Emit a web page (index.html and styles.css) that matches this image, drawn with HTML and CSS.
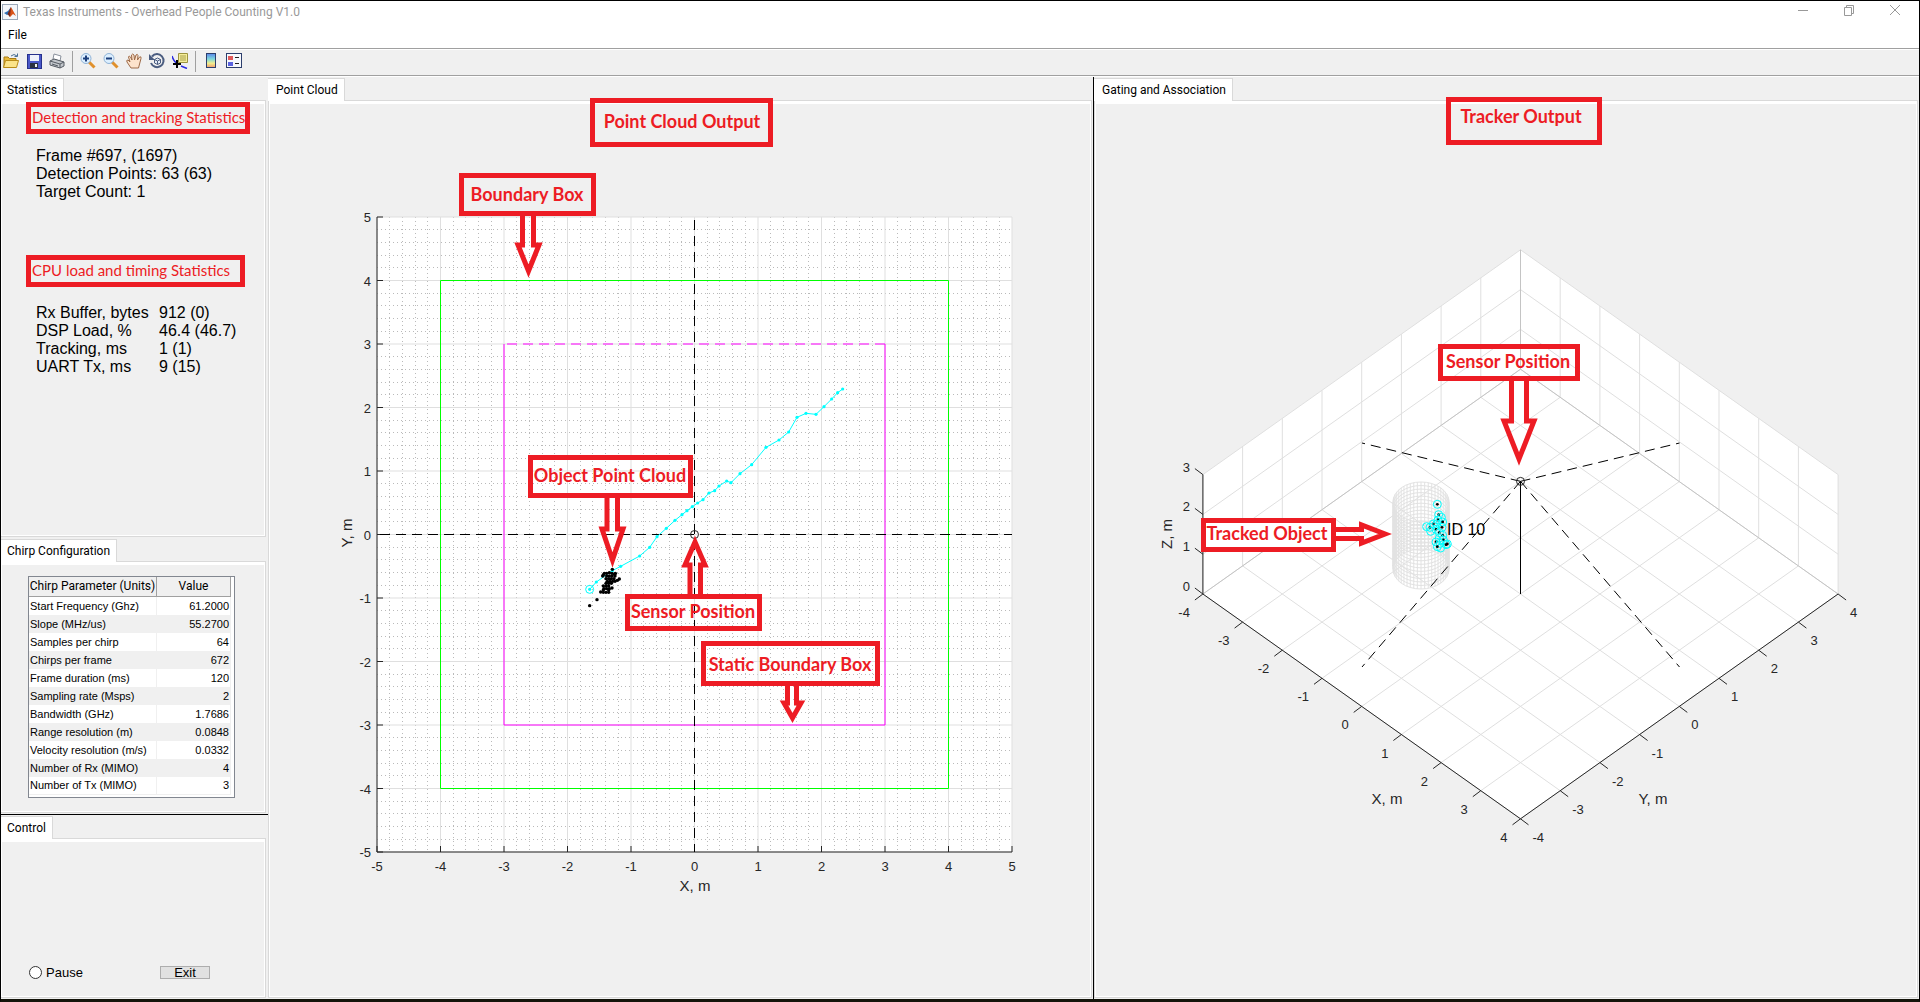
FILE: index.html
```html
<!DOCTYPE html>
<html lang="en">
<head>
<meta charset="utf-8">
<title>Texas Instruments - Overhead People Counting V1.0</title>
<link rel="stylesheet" href="styles.css">
</head>
<body>
<div class="window">
  <header class="titlebar">
    <svg class="app-icon" viewBox="0 0 16 16" aria-hidden="true">
      <rect x="0.5" y="0.5" width="15" height="15" fill="#f4f6fa" stroke="#9aa7b8"/>
      <path d="M2 9 L6 7 L9 3 L7.500 10 L5 11 Z" fill="#2f6fb5"/>
      <path d="M9 3 L14 12 L11 10 L8 13 L6 10 Z" fill="#d95319"/>
      <path d="M9 3 L8 13 L5.500 10 Z" fill="#7a2a1c"/>
    </svg>
    <h1 class="title">Texas Instruments - Overhead People Counting V1.0</h1>
    <div class="window-buttons">
      <button class="window-button" aria-label="Minimize"><svg viewBox="0 0 12 12"><path d="M1 6.500H11"/></svg></button>
      <button class="window-button" aria-label="Restore"><svg viewBox="0 0 12 12"><path d="M1.500 3.500H8.500V11.500H1.500ZM3.500 3.500V1.500H10.500V9.500H8.500"/></svg></button>
      <button class="window-button" aria-label="Close"><svg viewBox="0 0 12 12"><path d="M1 1L11 11M11 1L1 11"/></svg></button>
    </div>
  </header>

  <nav class="menubar"><button class="menu-item">File</button></nav>

  <div class="toolbar">
    <button class="tool" aria-label="Open"><svg viewBox="0 0 16 16">
      <path d="M1 14V4H5L6.500 5.500H13V8" fill="#e8b93a" stroke="#a87b12"/>
      <path d="M0.500 14.500L2.500 7.500H15.500L13.500 14.500Z" fill="#fbe38a" stroke="#b88a18"/>
      <path d="M8 3Q11 0 14 3M14.500 0.500V3.500H11.500" fill="none" stroke="#4a6f95"/></svg></button>
    <button class="tool" aria-label="Save"><svg viewBox="0 0 16 16">
      <rect x="1.500" y="1.500" width="14" height="14" fill="#4a58c8" stroke="#26308c"/>
      <rect x="4" y="2" width="9" height="6" fill="#eef1fb"/><rect x="4" y="10" width="8" height="5" fill="#2b3040"/>
      <rect x="9" y="11" width="2" height="3" fill="#f0f0f0"/></svg></button>
    <button class="tool" aria-label="Print"><svg viewBox="0 0 16 16">
      <path d="M5 1L12 3L11 8L4 6Z" fill="#fff" stroke="#8a919c"/>
      <path d="M1 8L5 6L15 9V13L11 15L1 12Z" fill="#c3c7cc" stroke="#555b63"/>
      <path d="M1 8L11 11L15 9M11 11V15M3 11L9 13" fill="none" stroke="#555b63"/></svg></button>
    <span class="tool-separator"></span>
    <button class="tool" aria-label="Zoom in"><svg viewBox="0 0 16 16">
      <path d="M9 9L14.500 14.500" stroke="#e0902c" stroke-width="3"/><circle cx="6" cy="5.500" r="5" fill="#dcefff" stroke="#8fb2d6"/>
      <path d="M3 5.500H9M6 2.500V8.500" stroke="#1c3f7c" stroke-width="2"/></svg></button>
    <button class="tool" aria-label="Zoom out"><svg viewBox="0 0 16 16">
      <path d="M9 9L14.500 14.500" stroke="#e0902c" stroke-width="3"/><circle cx="6" cy="5.500" r="5" fill="#dcefff" stroke="#8fb2d6"/>
      <path d="M3 5.500H9" stroke="#1c3f7c" stroke-width="2"/></svg></button>
    <button class="tool" aria-label="Pan"><svg viewBox="0 0 16 16">
      <path d="M5 15L1 9Q0 7 2 7L4 9L2.500 4Q3 2 4.500 4L6 7L5.500 2Q6.500 0 8 2L8.500 7L10 2Q11.500 0.500 12 2.500L11.500 7L13.500 4Q15.500 3 15 5.500L12.500 15Z" fill="#fde3cc" stroke="#9c6a48"/></svg></button>
    <button class="tool" aria-label="Rotate 3D"><svg viewBox="0 0 16 16">
      <path d="M3 3.500A6.500 6.500 0 1 1 2 10" fill="none" stroke="#4b5d80" stroke-width="2"/><path d="M0 1V7H6Z" fill="#4b5d80"/>
      <path d="M5.500 6.500L8.500 5L11.500 6.500V10L8.500 11.500L5.500 10ZM5.500 6.500L8.500 8L11.500 6.500M8.500 8V11.500" fill="#e4ebf6" stroke="#4b5d80"/></svg></button>
    <button class="tool" aria-label="Data cursor"><svg viewBox="0 0 16 16">
      <path d="M0 3Q2 9 5 10M9 13L15 15.500" fill="none" stroke="#2a2ae0" stroke-width="1.500"/>
      <path d="M6.500 0.500H15.500V9.500H6.500Z" fill="#f5ee9a" stroke="#9c9440"/><path d="M8 3H14M8 5H14M8 7H14" stroke="#a8a050"/>
      <path d="M1 11H9M5 7V15" stroke="#000" stroke-width="2"/></svg></button>
    <span class="tool-separator"></span>
    <button class="tool" aria-label="Insert colorbar"><svg viewBox="0 0 16 16">
      <defs><linearGradient id="bar" x2="0" y2="1"><stop offset="0" stop-color="#5a86e8"/><stop offset="0.400" stop-color="#7ed8dc"/><stop offset="0.700" stop-color="#f3ee8c"/><stop offset="1" stop-color="#ec9a72"/></linearGradient></defs>
      <rect x="3.500" y="0.500" width="9" height="14" fill="url(#bar)" stroke="#2c3e6c"/></svg></button>
    <button class="tool" aria-label="Insert legend"><svg viewBox="0 0 16 16">
      <rect x="0.500" y="0.500" width="15" height="14" fill="#f7f9fd" stroke="#2c3e6c"/><rect x="2" y="3" width="5" height="4" fill="#e0595a"/><rect x="2" y="9" width="5" height="4" fill="#5a62e0"/>
      <path d="M9 4.500H13M9 10.500H13" stroke="#222"/></svg></button>
  </div>

  <main class="workspace">
    <div class="sidebar">
      <section class="panel">
        <div class="tabs"><h2 class="tab">Statistics</h2></div>
        <div class="page stats">
          <p class="note note-detection">Detection and tracking Statistics</p>
          <div class="readout">Frame #697, (1697)<br>Detection Points: 63 (63)<br>Target Count: 1</div>
          <p class="note note-cpu">CPU load and timing Statistics</p>
          <dl class="readout load">
            <dt>Rx Buffer, bytes</dt><dd>912 (0)</dd>
            <dt>DSP Load, %</dt><dd>46.4 (46.7)</dd>
            <dt>Tracking, ms</dt><dd>1 (1)</dd>
            <dt>UART Tx, ms</dt><dd>9 (15)</dd>
          </dl>
        </div>
      </section>

      <section class="panel panel-chirp">
        <div class="tabs"><h2 class="tab">Chirp Configuration</h2></div>
        <div class="page chirp">
          <div class="table-frame">
            <table class="params">
              <thead><tr><th>Chirp Parameter (Units)</th><th>Value</th></tr></thead>
              <tbody>
                <tr><td>Start Frequency (Ghz)</td><td>61.2000</td></tr>
                <tr><td>Slope (MHz/us)</td><td>55.2700</td></tr>
                <tr><td>Samples per chirp</td><td>64</td></tr>
                <tr><td>Chirps per frame</td><td>672</td></tr>
                <tr><td>Frame duration (ms)</td><td>120</td></tr>
                <tr><td>Sampling rate (Msps)</td><td>2</td></tr>
                <tr><td>Bandwidth (GHz)</td><td>1.7686</td></tr>
                <tr><td>Range resolution (m)</td><td>0.0848</td></tr>
                <tr><td>Velocity resolution (m/s)</td><td>0.0332</td></tr>
                <tr><td>Number of Rx (MIMO)</td><td>4</td></tr>
                <tr><td>Number of Tx (MIMO)</td><td>3</td></tr>
              </tbody>
            </table>
          </div>
        </div>
      </section>

      <section class="panel">
        <div class="tabs"><h2 class="tab">Control</h2></div>
        <div class="page controls">
          <label class="pause"><input type="radio" name="pause">Pause</label>
          <button class="exit">Exit</button>
        </div>
      </section>
    </div>

    <section class="panel">
      <div class="tabs"><h2 class="tab tab-plot">Point Cloud</h2></div>
      <div class="page"><svg id="cloud" class="plot" viewBox="269 101 822 896" role="img" aria-label="Point cloud plot"></svg></div>
    </section>

    <section class="panel panel-tracker">
      <div class="tabs"><h2 class="tab tab-plot">Gating and Association</h2></div>
      <div class="page"><svg id="tracker" class="plot" viewBox="1095 101 822 896" role="img" aria-label="Tracker plot"></svg></div>
    </section>
  </main>
</div>
<script src="plots.js"></script>
</body>
</html>
```
FILE: styles.css
```css
* { box-sizing: border-box; margin: 0; padding: 0; }

body {
  font-family: Roboto, "Open Sans", sans-serif;
  font-size: 12px;
  color: #000;
}

button { font: inherit; color: inherit; border: 0; background: none; }

.window {
  display: flex;
  flex-direction: column;
  min-height: 100vh;
  border: 1px solid #000;
  border-bottom: 3px solid #14140a;
  background: #f0f0f0;
}

.titlebar {
  display: flex;
  align-items: center;
  height: 22px;
  padding-left: 1px;
  background: #fff;
}
.app-icon { width: 16px; height: 16px; }
.title { flex: 1; padding-left: 5px; font-size: 12px; font-weight: 400; color: #999; }
.window-buttons { display: flex; gap: 34px; padding: 0 18px 4px 0; }
.window-button { width: 12px; height: 12px; }
.window-button svg { display: block; width: 12px; height: 12px; fill: none; stroke: #999; }

.menubar { height: 25px; padding: 4px 7px; background: #fff; }
.menu-item { display: block; line-height: 17px; }

.toolbar {
  display: flex;
  align-items: center;
  gap: 7px;
  height: 28px;
  padding: 0 2px 2px;
  border-top: 1px solid #a0a0a0;
  border-bottom: 1px solid #a0a0a0;
  box-shadow: inset 0 1px #fff, 0 1px #fff;
}
.tool, .tool svg { display: block; width: 16px; height: 16px; }
.tool-separator { width: 1px; height: 21px; background: #a0a0a0; }

.workspace {
  flex: 1;
  display: grid;
  grid-template-columns: 267px minmax(0, 825fr) minmax(0, 826fr);
  padding-top: 1px;
}
.sidebar {
  display: grid;
  grid-template-rows: minmax(320px, 461fr) 277px minmax(120px, 184fr);
}

.panel { display: flex; flex-direction: column; min-width: 0; padding: 1px 1px 1px 0; }
.sidebar .panel { padding-right: 2px; }
.panel-chirp { border-bottom: 1px solid #000; }
.panel-tracker { border-left: 1px solid #000; }

.tabs { display: flex; height: 22px; }
.tab {
  height: 23px;
  padding: 0 6px;
  border: solid #d9d9d9;
  border-width: 1px 1px 0 0;
  background: #fff;
  font-size: 12px;
  font-weight: 400;
  line-height: 22px;
  z-index: 1;
}
.tab-plot { padding-left: 8px; }
.page {
  flex: 1;
  min-height: 0;
  border: 1px solid #d9d9d9;
  box-shadow: inset 0 3px #fff, inset 0 0 0 1px #fff;
}
.sidebar .page { border-left: 0; }
.plot { display: block; width: 100%; height: 100%; overflow: visible; position: relative; z-index: 2; }

.note {
  width: 224px;
  height: 32px;
  padding-left: 1px;
  border: 5px solid #ed1c24;
  font-family: Lato, sans-serif;
  font-size: 15px;
  line-height: 20px;
  white-space: nowrap;
  color: #ed1c24;
}
.stats { padding: 1px 0 0 25px; }
.note-cpu { width: 219px; margin-top: 54px; }
.readout {
  margin-top: 13px;
  padding-left: 10px;
  font-family: "Liberation Sans", Arial, sans-serif;
  font-size: 16px;
  line-height: 18px;
}
.stats .readout { white-space: nowrap; }
.load { display: grid; grid-template-columns: 123px 1fr; margin-top: 17px; }

.chirp { padding: 14px 0 0 27px; }
.table-frame {
  width: 207px;
  height: 222px;
  padding: 0 3px 2px 0;
  border: 1px solid #828790;
  background: #fff;
}
.params { width: 202px; border-collapse: separate; border-spacing: 0; table-layout: fixed; }
.params th {
  height: 20px;
  border: solid #a0a0a0;
  border-width: 0 1px 1px 0;
  background: #f0f0f0;
  font-weight: 400;
  line-height: 19px;
  white-space: nowrap;
}
.params th:first-child { width: 128px; }
.params td {
  height: 18px;
  padding: 0 1px;
  border-right: 1px solid #f0f0f0;
  font-family: "Liberation Sans", Arial, sans-serif;
  font-size: 11px;
  line-height: 17px;
  white-space: nowrap;
}
.params td:last-child { text-align: right; }
.params tr:nth-child(even) td { background: #f0f0f0; }
.params tr:last-child td { border-bottom: 1px solid #f0f0f0; }

.controls {
  display: flex;
  align-items: flex-end;
  justify-content: space-between;
  padding: 0 55px 18px 28px;
  font-family: "Liberation Sans", Arial, sans-serif;
  font-size: 13px;
}
.pause { display: flex; align-items: center; gap: 4px; height: 13px; }
.pause input {
  appearance: none;
  width: 13px;
  height: 13px;
  border: 1px solid #333;
  border-radius: 50%;
  background: #fff;
}
.exit {
  width: 50px;
  height: 13px;
  border: 1px solid #adadad;
  background: #e1e1e1;
  line-height: 11px;
}

.plot text { font-family: "Liberation Sans", Arial, sans-serif; font-size: 13px; fill: #262626; }
.plot .axis-name { font-size: 15px; text-anchor: middle; }
.plot .target-name { font-size: 16px; fill: #000; }
.plot .callout-text { font-family: Lato, sans-serif; font-size: 18px; font-weight: 700; fill: #ed1c24; text-anchor: middle; }
.callout { fill: none; stroke: #ed1c24; stroke-width: 5; }
.callout-solid { fill: #fff; }
.end { text-anchor: end; }
.middle { text-anchor: middle; }
.bg { fill: #fff; }
.grid, .minor, .edge, .axis, .tick, .zone, .static, .dash, .solid, .mesh, .track { fill: none; }
.grid { stroke: #dfdfdf; }
.minor { stroke: #bababa; stroke-dasharray: 1 3; }
.edge { stroke: #c4c4c4; }
.axis, .tick { stroke: #262626; }
.zone { stroke: #0f0; }
.static { stroke: #f0f; }
.dash { stroke: #000; stroke-dasharray: 10 6; }
.dashed-side { stroke-dasharray: 10 6; }
.solid { stroke: #000; }
.mesh { stroke: #e2e2e2; }
.track { stroke: #0ff; }
.track-dot { fill: #0ff; }
.ring { fill: none; stroke: #0ff; }
.sensor { fill: none; stroke: #262626; }
```
FILE: plots.js
```js
const NS = 'http://www.w3.org/2000/svg';

function plot(id) {
  const root = document.getElementById(id);
  const add = (tag, cls, attrs, text) => {
    const el = document.createElementNS(NS, tag);
    el.setAttribute('class', cls);
    for (const k in attrs) el.setAttribute(k, attrs[k]);
    if (text !== undefined) el.textContent = text;
    root.appendChild(el);
  };
  return {
    path: (cls, d) => add('path', cls, { d }),
    line: (cls, a, b) => add('path', cls, { d: `M${a}L${b}` }),
    dot: (cls, x, y, r) => add('circle', cls, { cx: x, cy: y, r }),
    text: (cls, x, y, s) => add('text', cls, { x, y }, s),
    turned: (cls, x, y, s) => add('text', cls, { transform: `translate(${x} ${y}) rotate(-90)` }, s),
    callout(x, y, right, bottom, label, tx, ty, solid) {
      add('rect', 'callout' + (solid ? ' callout-solid' : ''),
        { x: x + 2.5, y: y + 2.5, width: right - x - 5, height: bottom - y - 5 });
      add('text', 'callout-text', { x: tx, y: ty }, label);
    },
  };
}

/* Point cloud, seen from above */
(() => {
  const p = plot('cloud');
  const X = v => 694.5 + 63.5 * v, Y = v => 534.5 - 63.5 * v;
  p.path('bg', 'M377 217H1012V852H377Z');
  for (let i = -25; i <= 25; i++) {
    if (i % 5 === 0) continue;
    const x = Math.floor(X(i / 5)) + 0.5, y = Math.floor(Y(i / 5)) + 0.5;
    p.path('minor', `M${x} 217V852`);
    p.path('minor', `M377 ${y}H1012`);
  }
  for (let i = -5; i <= 5; i++) p.path('grid', `M${X(i)} 217V852M377 ${Y(i)}H1012`);
  p.path('axis', 'M377 217V852H1012');
  for (let i = -5; i <= 5; i++) {
    p.path('tick', `M${X(i)} 852v-6M377 ${Y(i)}h6`);
    p.text('middle', X(i), 871, i);
    p.text('end', 371, Y(i) + 5, i);
  }
  p.text('axis-name', 695, 891, 'X, m');
  p.turned('axis-name', 352, 533, 'Y, m');
  p.path('zone', `M${X(-4)} ${Y(4)}H${X(4)}V${Y(-4)}H${X(-4)}Z`);
  p.path('static', `M${X(-3)} ${Y(3)}V${Y(-3)}H${X(3)}V${Y(3)}`);
  p.path('static dashed-side', `M${X(-3) + 3} ${Y(3)}H${X(3)}`);
  p.path('dash', 'M694.5 220V852');
  p.path('dash', 'M380 534.5H1012');

  const track = [[269,688],[289,666],[337,632],[362,619],[419,588],[449,562],[471,530],[499,505],[525,481],[546,464],
    [561,452],[577,440],[593,429],[609,419],[627,399],[644,392],[657,378],[680,363],[693,368],[720,341],[755,314],
    [798,262],[837,240],[866,216],[891,172],[918,160],[948,163],[972,140],[995,117],[1013,98],[1028,87]]
    .map(([x, y]) => [500 + x / 3, 360 + y / 3]);
  p.path('track', 'M' + track.join('L'));
  track.forEach(([x, y]) => p.dot('track-dot', x, y, 1.6));
  p.dot('ring', track[0][0], track[0][1], 4);

  [[337,628],[291,719],[269,737],[358,657],[352,661],[345,664],[310,645],[313,640],[320,640],[328,638],[336,640],[346,640],
    [320,648],[328,648],[336,648],[345,648],[318,656],[326,656],[334,656],[342,656],[322,664],[330,664],[338,664],
    [318,670],[326,670],[334,670],[310,678],[318,678],[326,678],[336,684],[312,686],[320,686],[328,686],
    [302,696],[310,690],[310,697],[318,697],[326,697],[344,643],[326,690],[308,648]]
    .forEach(([x, y]) => p.dot('points', 500 + x / 3, 360 + y / 3, 1.7));
  p.dot('sensor', 694.5, 534.5, 4);

  p.callout(590, 98, 773, 147, 'Point Cloud Output', 682, 128);
  p.callout(459, 173, 596, 216, 'Boundary Box', 527, 201);
  p.path('callout', 'M522.5 215V245H518L528.5 271L539 245H533.5V215');
  p.callout(528, 455, 693, 498, 'Object Point Cloud', 610, 482);
  p.path('callout', 'M607 497V529H602L612.500 560L623 529H617.500V497');
  p.callout(625, 594, 762, 631, 'Sensor Position', 693, 618);
  p.path('callout', 'M690 596V565H685L695 542L705 565H700.500V596');
  p.callout(701, 641, 880, 686, 'Static Boundary Box', 790, 671);
  p.path('callout', 'M787.500 685V703H784L792.500 718L801 703H796.500V685');
})();

/* Tracker, isometric view */
(() => {
  const p = plot('tracker');
  const P = (x, y, z) => [1520.5 + 39.7 * (x + y), 594 + 28.1 * (x - y) - 39.8 * z];
  p.path('bg', 'M' + [P(-4,-4,0), P(4,-4,0), P(4,4,0), P(4,4,3), P(-4,4,3), P(-4,-4,3)].join('L') + 'Z');
  for (let i = -4; i <= 4; i++) {
    p.line('grid', P(i, -4, 0), P(i, 4, 0));
    p.line('grid', P(-4, i, 0), P(4, i, 0));
    p.line('grid', P(-4, i, 0), P(-4, i, 3));
    p.line('grid', P(i, 4, 0), P(i, 4, 3));
  }
  for (let z = 1; z <= 3; z++) p.path('grid', 'M' + [P(-4,-4,z), P(-4,4,z), P(4,4,z)].join('L'));
  p.path('edge', 'M' + [P(-4,-4,0), P(-4,4,0), P(4,4,0)].join('L'));
  p.line('edge', P(-4, 4, 0), P(-4, 4, 3));
  p.path('axis', 'M' + [P(-4,-4,3), P(-4,-4,0), P(4,-4,0), P(4,4,0)].join('L'));
  for (let i = -4; i <= 4; i++) {
    const a = P(i, -4, 0), b = P(4, i, 0);
    p.path('tick', `M${a}l-8 6M${b}l8 6`);
    p.text('end', a[0] - 13, a[1] + 23, i);
    p.text('start', b[0] + 12, b[1] + 23, i);
  }
  for (let z = 0; z <= 3; z++) {
    const a = P(-4, -4, z);
    p.path('tick', `M${a}l-8 -6`);
    p.text('end', a[0] - 13, a[1] - 3, z);
  }
  p.text('axis-name', 1387, 804, 'X, m');
  p.text('axis-name', 1653, 804, 'Y, m');
  p.turned('axis-name', 1172, 534, 'Z, m');

  const cx = 1421, top = 502, base = 569;
  let mesh = '';
  for (let i = 0; i < 48; i++) {
    const t = i * Math.PI / 24;
    const x = cx + 28 * Math.cos(t), dy = 20 * Math.sin(t);
    mesh += `M${x} ${top + dy}V${base + dy}`;
  }
  for (let i = 0; i <= 19; i++) {
    const y = top + (base - top) * i / 19;
    mesh += `M${cx - 28} ${y}A28 20 0 0 1 ${cx + 28} ${y}A28 20 0 0 1 ${cx - 28} ${y}`;
  }
  p.path('mesh', mesh);

  const sensor = P(0, 0, 2.83);
  [[1362, 443], [1679.5, 443], [1362, 667], [1679.5, 667]].forEach(e => p.line('dash', sensor, e));
  p.line('solid', sensor, P(0, 0, 0));
  p.dot('sensor', sensor[0], sensor[1], 4);

  [[862,253],[866,284],[874,292],[864,300],[878,306],[830,320],[840,322],[850,312],[860,312],[858,328],[876,322],
    [842,334],[868,338],[878,346],[868,354],[880,360],[858,366],[870,370],[888,374],[892,372],[872,384],[862,380]]
    .forEach(([x, y], i) => {
      p.dot('ring', 1150 + x / 3, 420 + y / 3, 4);
      if (i % 3 < 2) p.dot('points', 1150 + x / 3, 420 + y / 3, 1.4);
    });
  p.text('target-name', 1447, 535, 'ID 10');

  p.callout(1446, 97, 1602, 145, 'Tracker Output', 1521, 123);
  p.callout(1438, 344, 1580, 381, 'Sensor Position', 1508, 368);
  p.path('callout', 'M1511.500 380V421H1504L1519 459L1534 421H1526.500V380');
  p.callout(1201, 518, 1336, 552, 'Tracked Object', 1267, 540, true);
  p.path('callout', 'M1335 529.500H1361.500V525L1385 534L1361.500 543V538.500H1335');
})();
```
